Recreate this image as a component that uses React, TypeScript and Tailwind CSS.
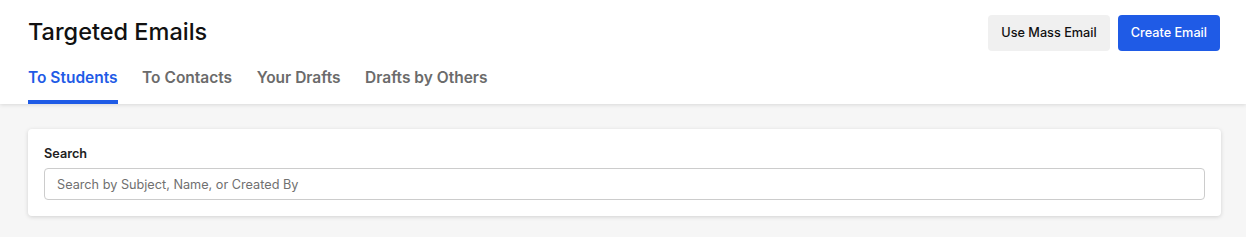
export default function App() {
  const tabs = ["To Students", "To Contacts", "Your Drafts", "Drafts by Others"];
  return (
    <div className="min-h-[237px] bg-[#f6f6f6]" style={{ fontFamily: "Inter, 'Liberation Sans', sans-serif" }}>
      <header className="relative z-10 bg-white px-[28px] shadow-[0_1px_4px_rgba(0,0,0,0.12)]">
        <div className="flex items-start justify-between pt-[15px]">
          <h1 className="mt-[1px] text-[23.5px] leading-[32px] font-medium text-[#111]">Targeted Emails</h1>
          <div className="mr-[-2px] flex gap-[8px]">
            <button className="h-[36px] rounded-[4px] bg-[#f0f0f0] px-[13px] text-[12.7px] font-medium text-[#111]">Use Mass Email</button>
            <button className="h-[36px] rounded-[4px] bg-[#1f5be6] px-[13px] text-[12.7px] font-medium text-white">Create Email</button>
          </div>
        </div>
        <nav className="mt-[16px] flex gap-[24.5px]">
          {tabs.map((t, i) => (
            <div
              key={t}
              className={
                "border-b-[4px] pb-[12px] pt-[1px] text-[15.5px] leading-[20px] font-semibold " +
                (i === 0 ? "border-[#1f5be6] text-[#1f5be6]" : "border-transparent text-[#6b6b6b]")
              }
            >
              {t}
            </div>
          ))}
        </nav>
      </header>
      <main className="pt-[25px] pb-[20px] pl-[28px] pr-[25px]">
        <div className="rounded-[4px] bg-white px-[16px] pt-[17px] pb-[16px] shadow-[0_1px_4px_rgba(0,0,0,0.15)]">
          <label className="block text-[12.7px] leading-[16px] font-semibold text-[#222]">Search</label>
          <input
            className="mt-[6px] block h-[32px] w-full rounded-[4px] border border-[#cccccc] bg-white px-[12px] text-[12.7px] text-[#222] placeholder:text-[#707070] outline-none"
            placeholder="Search by Subject, Name, or Created By"
          />
        </div>
      </main>
    </div>
  );
}
